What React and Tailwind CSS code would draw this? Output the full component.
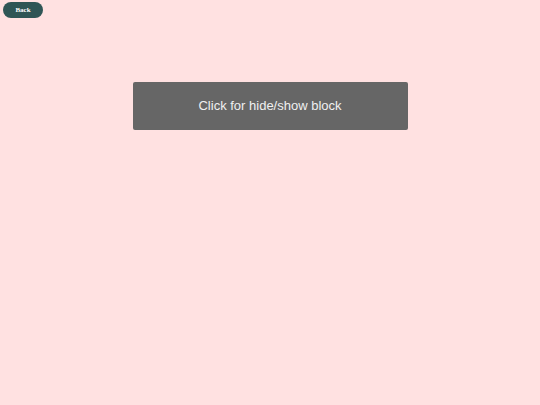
export default function App() {
  return (
    <div className="min-h-screen w-full bg-[#ffe1e1] relative">
      <div className="pl-[3px] pt-[2px]">
        <button className="w-[40px] h-[16px] rounded-full bg-[#2f5555] text-white text-[7px] font-bold flex items-center justify-center" style={{ fontFamily: '"Liberation Serif", serif' }}>
          Back
        </button>
      </div>
      <div className="flex justify-center pt-[64px]">
        <div className="w-[275px] h-[48px] bg-[#666666] rounded-[2px] flex items-center justify-center text-[#f0f0f0] text-[13px]" style={{ fontFamily: '"Liberation Sans", Arial, sans-serif' }}>
          Click for hide/show block
        </div>
      </div>
    </div>
  );
}
